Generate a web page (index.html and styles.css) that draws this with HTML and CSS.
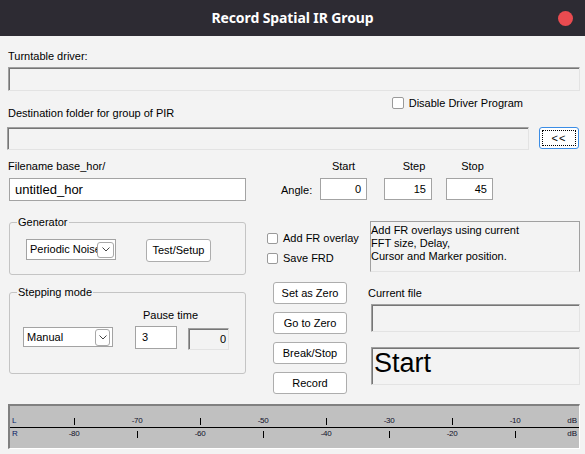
FILE: index.html
```html
<!DOCTYPE html>
<html>
<head>
<meta charset="utf-8">
<title>Record Spatial IR Group</title>
<link rel="stylesheet" href="styles.css">
</head>
<body>
<div class="window">
  <header class="titlebar">
    <span></span>
    <h1 class="title">Record Spatial IR Group</h1>
    <span class="close"></span>
  </header>
  <main class="content">
    <div class="label lbl-turntable">Turntable driver:</div>
    <div class="sunken field-driver"></div>
    <div class="row-dest">
      <div class="label lbl-dest">Destination folder for group of PIR</div>
      <label class="check check-disable"><span class="box"></span>Disable Driver Program</label>
    </div>
    <div class="row-folder">
      <div class="sunken field-folder"></div>
      <button class="btn btn-browse"><span class="focus">&lt;&lt;</span></button>
    </div>
    <div class="main">
      <div class="col-left">
        <div class="label lbl-filename">Filename base_hor/</div>
        <div class="input input-filename">untitled_hor</div>
        <div class="group group-gen">
          <span class="group-title">Generator</span>
          <div class="combo combo-gen">
            <span class="combo-text">Periodic Noise</span>
            <span class="combo-btn"><svg width="8" height="5" viewBox="0 0 8 5"><path d="M0.5 0.5 L4 4 L7.5 0.5" fill="none" stroke="#444" stroke-width="1"/></svg></span>
          </div>
          <button class="btn btn-test">Test/Setup</button>
        </div>
        <div class="group group-step">
          <span class="group-title">Stepping mode</span>
          <div class="combo combo-step">
            <span class="combo-text">Manual</span>
            <span class="combo-btn"><svg width="8" height="5" viewBox="0 0 8 5"><path d="M0.5 0.5 L4 4 L7.5 0.5" fill="none" stroke="#444" stroke-width="1"/></svg></span>
          </div>
          <div class="pause">
            <div class="label lbl-pause">Pause time</div>
            <div class="pause-row">
              <div class="input input-pause">3</div>
              <div class="sunken field-zero">0</div>
            </div>
          </div>
        </div>
      </div>
      <div class="col-right">
        <div class="angle">
          <span></span>
          <span class="label head head-start">Start</span>
          <span class="label head head-step">Step</span>
          <span class="label head head-stop">Stop</span>
          <span class="label angle-label">Angle:</span>
          <div class="input num num-a">0</div>
          <div class="input num num-b">15</div>
          <div class="input num num-c">45</div>
        </div>
        <div class="row-fr">
          <div class="checks">
            <label class="check"><span class="box"></span>Add FR overlay</label>
            <label class="check check-second"><span class="box"></span>Save FRD</label>
          </div>
          <div class="info">Add FR overlays using current<br>FFT size, Delay,<br>Cursor and Marker position.</div>
        </div>
        <div class="row-actions">
          <div class="actions">
            <button class="btn btn-action">Set as Zero</button>
            <button class="btn btn-action">Go to Zero</button>
            <button class="btn btn-action">Break/Stop</button>
            <button class="btn btn-action">Record</button>
          </div>
          <div class="status">
            <div class="label lbl-current">Current file</div>
            <div class="sunken field-current"></div>
            <div class="sunken field-start">Start</div>
          </div>
        </div>
      </div>
    </div>
    <div class="meter">
      <div class="meter-row">
        <span class="ch">L</span>
        <i class="tick"></i><span class="mk">-70</span><i class="tick"></i><span class="mk">-50</span><i class="tick"></i><span class="mk">-30</span><i class="tick"></i><span class="mk">-10</span>
        <span class="unit">dB</span>
      </div>
      <div class="meter-line"></div>
      <div class="meter-row">
        <span class="ch">R</span>
        <span class="mk">-80</span><i class="tick"></i><span class="mk">-60</span><i class="tick"></i><span class="mk">-40</span><i class="tick"></i><span class="mk">-20</span><i class="tick"></i>
        <span class="unit">dB</span>
      </div>
    </div>
  </main>
</div>
</body>
</html>
```
FILE: styles.css
```css
* { box-sizing: border-box; }

html, body {
  margin: 0;
  padding: 0;
}

body {
  width: 585px;
  height: 454px;
  overflow: hidden;
  background: #f3f3f3;
  font: 11px/13px "Liberation Sans", Arial, sans-serif;
  color: #000;
}

.titlebar {
  height: 36px;
  background: #2d2b33;
  display: grid;
  grid-template-columns: 1fr auto 1fr;
  align-items: center;
}

.title {
  margin: 0;
  font: 700 14px/16px "Noto Sans", "DejaVu Sans", sans-serif;
  color: #fff;
  letter-spacing: -0.1px;
}

.close {
  justify-self: end;
  width: 15px;
  height: 15px;
  margin-right: 12px;
  border-radius: 50%;
  background: #e94b50;
}

.content {
  padding: 0 5px 0 8px;
}

.label {
  white-space: nowrap;
}

.lbl-turntable { margin-top: 14px; }

.sunken {
  background: #f3f3f3;
  border-top: 1px solid #a0a0a0;
  border-left: 1px solid #a0a0a0;
  border-right: 1px solid #e3e3e3;
  border-bottom: 1px solid #e3e3e3;
  box-shadow: inset 1px 1px 0 #767676;
}

.field-driver {
  margin-top: 4px;
  height: 24px;
}

.row-dest {
  display: flex;
  align-items: flex-end;
  height: 29px;
}

.check {
  display: flex;
  align-items: center;
  height: 12px;
  white-space: nowrap;
}

.box {
  width: 12px;
  height: 12px;
  margin-right: 5px;
  background: #fff;
  border: 1px solid #9a9a9a;
  border-radius: 2px;
  flex: none;
}

.check-disable {
  align-self: flex-start;
  margin-left: auto;
  margin-right: 57px;
  margin-top: 6px;
}

.row-folder {
  display: flex;
  margin-top: 7px;
  margin-left: -1px;
  gap: 10px;
}

.field-folder {
  flex: 1;
  height: 23px;
}

.btn {
  font: inherit;
  color: #000;
  background: #fff;
  border: 1px solid #adadad;
  border-radius: 3px;
  padding: 0;
  display: flex;
  align-items: center;
  justify-content: center;
  white-space: nowrap;
}

.btn-browse {
  width: 40px;
  height: 22px;
  margin-right: 1px;
  border-color: #3b8de6;
  padding: 2px;
}

.focus {
  width: 100%;
  height: 100%;
  border: 1px dotted #000;
  display: flex;
  align-items: center;
  justify-content: center;
  letter-spacing: 1px;
}

.main {
  display: flex;
}

.col-left {
  width: 237px;
  margin-left: 1px;
  flex: none;
}

.lbl-filename {
  margin-top: 10px;
  margin-left: -1px;
}

.input {
  background: #fff;
  border: 1px solid #a3a3a3;
}

.input-filename {
  margin-top: 5px;
  height: 23px;
  font-size: 13px;
  padding-left: 5px;
  display: flex;
  align-items: center;
}

.group {
  position: relative;
  border: 1px solid #c4c4c4;
  border-radius: 3px;
  display: flex;
  align-items: flex-start;
}

.group-title {
  position: absolute;
  top: -7px;
  left: 7px;
  padding: 0 1px;
  background: #f3f3f3;
  line-height: 13px;
}

.group-gen {
  margin-top: 21px;
  height: 53px;
  padding: 16px 0 0 16px;
}

.combo {
  display: flex;
  align-items: center;
  background: #fff;
  border: 1px solid #a3a3a3;
  width: 90px;
}

.combo-text {
  flex: 1;
  min-width: 0;
  overflow: hidden;
  white-space: nowrap;
  padding-left: 3px;
}

.combo-btn {
  flex: none;
  display: flex;
  align-items: center;
  justify-content: center;
  border: 1px solid #a8a8a8;
  border-radius: 3px;
  background: #fff;
}

.combo-gen {
  height: 21px;
}

.combo-gen .combo-btn {
  width: 17px;
  height: 16px;
  margin-right: 1px;
}

.btn-test {
  margin-left: 30px;
  width: 65px;
  height: 23px;
}

.group-step {
  margin-top: 17px;
  height: 82px;
  padding-left: 13px;
}

.combo-step {
  margin-top: 34px;
  height: 20px;
}

.combo-step .combo-btn {
  width: 15px;
  height: 17px;
  margin-right: 2px;
}

.pause {
  margin-left: 22px;
  margin-top: 16px;
}

.lbl-pause {
  margin-left: 8px;
}

.pause-row {
  display: flex;
  align-items: flex-start;
  margin-top: 4px;
}

.input-pause {
  width: 42px;
  height: 23px;
  padding-left: 6px;
  display: flex;
  align-items: center;
}

.field-zero {
  width: 41px;
  height: 22px;
  margin-left: 11px;
  margin-top: 2px;
  padding-right: 2px;
  display: flex;
  align-items: center;
  justify-content: flex-end;
}

.col-right {
  flex: 1;
  margin-left: 21px;
}

.angle {
  display: grid;
  grid-template-columns: 39px 64px 62px 47px;
  grid-template-rows: 13px 22px;
  row-gap: 5px;
  margin-top: 10px;
  margin-left: 14px;
}

.head {
  text-align: center;
  width: 47px;
}

.head-step {
  width: 48px;
  padding-left: 12px;
}

.head-stop {
  padding-left: 6px;
}

.angle-label {
  align-self: center;
  padding-top: 2px;
}

.num {
  height: 22px;
  padding-right: 5px;
  display: flex;
  align-items: center;
  justify-content: flex-end;
}

.num-a, .num-c { width: 47px; }
.num-b { width: 48px; }

.row-fr {
  display: flex;
  margin-top: 21px;
}

.checks {
  width: 103px;
  padding-top: 11px;
  flex: none;
}

.checks .box {
  width: 11px;
  height: 11px;
}

.check-second {
  margin-top: 8px;
}

.info {
  width: 210px;
  height: 51px;
  background: #f3f3f3;
  border-top: 1px solid #a0a0a0;
  border-left: 1px solid #a0a0a0;
  border-right: 1px solid #a0a0a0;
  border-bottom: 1px solid #e3e3e3;
  padding: 2px 0 0 0;
  white-space: nowrap;
}

.row-actions {
  display: flex;
  margin-top: 10px;
}

.actions {
  display: flex;
  flex-direction: column;
  gap: 8px;
  margin-left: 6px;
  width: 74px;
  flex: none;
}

.btn-action {
  height: 22px;
}

.status {
  margin-left: 24px;
  width: 209px;
}

.lbl-current {
  margin-top: 5px;
  margin-left: -3px;
}

.field-current {
  margin-top: 4px;
  height: 28px;
}

.field-start {
  margin-top: 15px;
  height: 38px;
  font-size: 27px;
  line-height: 27px;
  padding: 2px 0 0 2px;
}

.meter {
  margin-top: 10px;
  height: 45px;
  background: #c0c0c0;
  border-top: 2px solid #808080;
  border-left: 2px solid #808080;
  border-right: 1px solid #fff;
  border-bottom: 1px solid #fff;
  padding-top: 10px;
  font-size: 8px;
  line-height: 10px;
  color: #10102a;
}

.meter-row {
  display: grid;
  grid-template-columns: 32.5px repeat(8, 63px) 1fr;
  height: 10px;
  align-items: start;
}

.meter-row + .meter-line + .meter-row {
  margin-top: 1px;
}

.ch {
  padding-left: 2px;
  color: #0a1a66;
}

.mk {
  justify-self: center;
  letter-spacing: -0.4px;
}

.tick {
  justify-self: center;
  width: 1px;
  height: 7px;
  margin-top: 2px;
  background: #000;
}

.unit {
  justify-self: end;
  padding-right: 2px;
}

.meter-line {
  height: 1px;
  background: #000;
  margin-top: 1px;
}
```
